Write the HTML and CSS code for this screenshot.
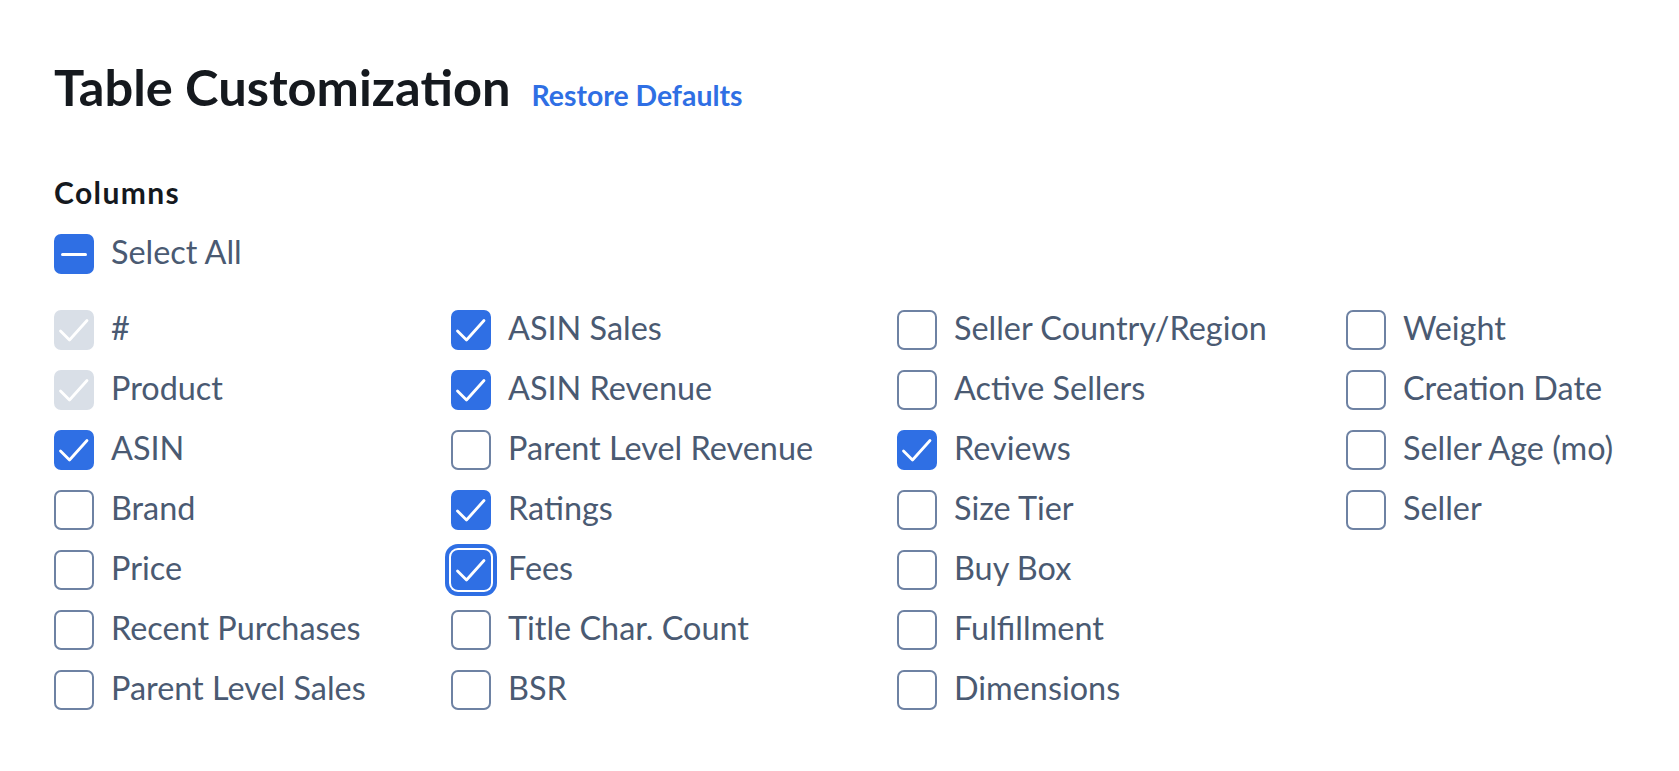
FILE: index.html
```html
<!DOCTYPE html>
<html>
<head>
<meta charset="utf-8">
<link rel="stylesheet" href="styles.css">
</head>
<body>
<div class="page">
  <div class="header">
    <h1 class="title">Table Customization</h1>
    <a class="restore">Restore Defaults</a>
  </div>
  <h2 class="section">Columns</h2>
  <label class="item select-all">
    <span class="box indeterminate"><span class="bar"></span></span>
    <span class="label">Select All</span>
  </label>
  <div class="grid">
    <label class="item"><span class="box disabled"><svg viewBox="0 0 40 40"><polyline points="6.5,21 15.5,30 33,10.5"/></svg></span><span class="label">#</span></label>
    <label class="item"><span class="box disabled"><svg viewBox="0 0 40 40"><polyline points="6.5,21 15.5,30 33,10.5"/></svg></span><span class="label">Product</span></label>
    <label class="item"><span class="box checked"><svg viewBox="0 0 40 40"><polyline points="6.5,21 15.5,30 33,10.5"/></svg></span><span class="label">ASIN</span></label>
    <label class="item"><span class="box"></span><span class="label">Brand</span></label>
    <label class="item"><span class="box"></span><span class="label">Price</span></label>
    <label class="item"><span class="box"></span><span class="label">Recent Purchases</span></label>
    <label class="item"><span class="box"></span><span class="label">Parent Level Sales</span></label>

    <label class="item"><span class="box checked"><svg viewBox="0 0 40 40"><polyline points="6.5,21 15.5,30 33,10.5"/></svg></span><span class="label">ASIN Sales</span></label>
    <label class="item"><span class="box checked"><svg viewBox="0 0 40 40"><polyline points="6.5,21 15.5,30 33,10.5"/></svg></span><span class="label">ASIN Revenue</span></label>
    <label class="item"><span class="box"></span><span class="label">Parent Level Revenue</span></label>
    <label class="item"><span class="box checked"><svg viewBox="0 0 40 40"><polyline points="6.5,21 15.5,30 33,10.5"/></svg></span><span class="label">Ratings</span></label>
    <label class="item"><span class="box checked focused"><svg viewBox="0 0 40 40"><polyline points="6.5,21 15.5,30 33,10.5"/></svg></span><span class="label">Fees</span></label>
    <label class="item"><span class="box"></span><span class="label">Title Char. Count</span></label>
    <label class="item"><span class="box"></span><span class="label">BSR</span></label>

    <label class="item"><span class="box"></span><span class="label">Seller Country/Region</span></label>
    <label class="item"><span class="box"></span><span class="label">Active Sellers</span></label>
    <label class="item"><span class="box checked"><svg viewBox="0 0 40 40"><polyline points="6.5,21 15.5,30 33,10.5"/></svg></span><span class="label">Reviews</span></label>
    <label class="item"><span class="box"></span><span class="label">Size Tier</span></label>
    <label class="item"><span class="box"></span><span class="label">Buy Box</span></label>
    <label class="item"><span class="box"></span><span class="label">Fulfillment</span></label>
    <label class="item"><span class="box"></span><span class="label">Dimensions</span></label>

    <label class="item"><span class="box"></span><span class="label">Weight</span></label>
    <label class="item"><span class="box"></span><span class="label">Creation Date</span></label>
    <label class="item"><span class="box"></span><span class="label">Seller Age (mo)</span></label>
    <label class="item"><span class="box"></span><span class="label">Seller</span></label>
  </div>
</div>
</body>
</html>
```

FILE: styles.css
```css
html, body {
  margin: 0;
  padding: 0;
  background: #ffffff;
}

.page {
  padding: 61px 0 0 54px;
  font-family: "Lato", "Noto Sans", sans-serif;
}

.header {
  display: flex;
  align-items: baseline;
  gap: 21px;
}

.title {
  margin: 0;
  font-size: 50.6px;
  line-height: 51px;
  font-weight: 700;
  color: #15191e;
}

.restore {
  font-size: 28.4px;
  font-weight: 700;
  color: #2f6fe4;
  text-decoration: none;
}

.section {
  margin: 62px 0 0 0;
  font-size: 30px;
  line-height: 36px;
  letter-spacing: 1.4px;
  font-weight: 700;
  color: #15191e;
}

.item {
  display: flex;
  align-items: center;
  gap: 17px;
  height: 40px;
}

.select-all {
  margin-top: 24px;
}

.label {
  font-size: 32.4px;
  padding-bottom: 6px;
  color: #4a5a72;
  white-space: nowrap;
}

.box {
  box-sizing: border-box;
  flex: 0 0 40px;
  width: 40px;
  height: 40px;
  border: 2px solid #6e82a3;
  border-radius: 7px;
  background: #ffffff;
  display: flex;
  align-items: center;
  justify-content: center;
}

.box svg {
  width: 40px;
  height: 40px;
  flex: 0 0 40px;
  margin: -2px;
}

.box polyline {
  fill: none;
  stroke: #ffffff;
  stroke-width: 2.8;
  stroke-linecap: round;
  stroke-linejoin: round;
}

.box.checked,
.box.indeterminate {
  background: #2f6fe4;
  border-color: #2f6fe4;
}

.box.disabled {
  background: #d9dfe7;
  border-color: #d9dfe7;
}

.box.focused {
  box-shadow: 0 0 0 2px #ffffff, 0 0 0 6px #2f6fe4;
}

.bar {
  width: 26px;
  height: 3px;
  border-radius: 2px;
  background: #ffffff;
}

.grid {
  margin-top: 36px;
  display: grid;
  grid-template-columns: 397px 446px 449px auto;
  grid-template-rows: repeat(7, 40px);
  grid-auto-flow: column;
  row-gap: 20px;
}
```
